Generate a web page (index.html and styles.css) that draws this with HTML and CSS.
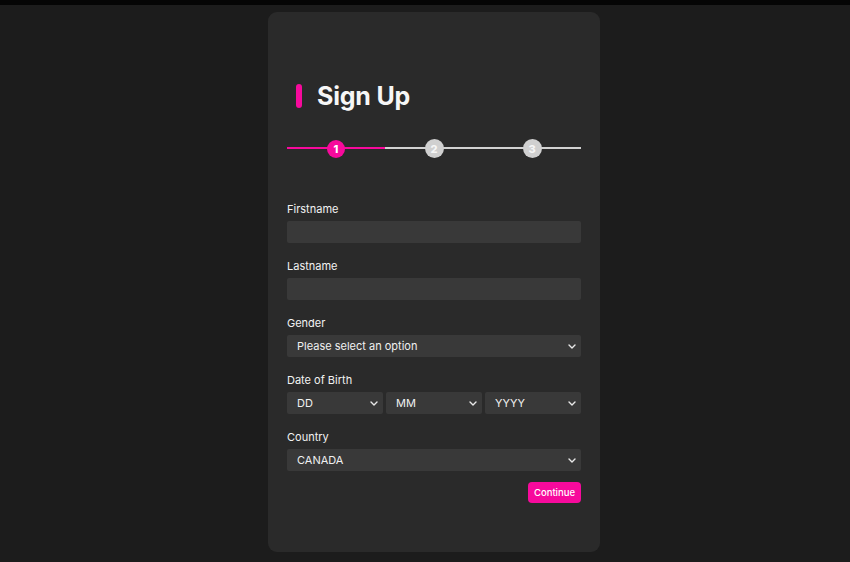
FILE: index.html
```html
<!DOCTYPE html>
<html lang="en">
<head>
<meta charset="utf-8">
<title>Sign Up</title>
<link rel="stylesheet" href="styles.css">
</head>
<body>
<div class="topbar"></div>
<main class="card">
  <h1 class="title"><span class="title-mark"></span>Sign Up</h1>
  <div class="stepper">
    <div class="step-track"><div class="step-fill"></div></div>
    <div class="steps">
      <span class="step active">1</span>
      <span class="step">2</span>
      <span class="step">3</span>
    </div>
  </div>
  <form class="form">
    <div class="fields">
      <div class="field">
        <label class="label">Firstname</label>
        <input class="input" type="text">
      </div>
      <div class="field">
        <label class="label">Lastname</label>
        <input class="input" type="text">
      </div>
      <div class="field">
        <label class="label">Gender</label>
        <div class="select-wrap">
          <select class="select"><option>Please select an option</option></select>
          <svg class="chev" width="8" height="5" viewBox="0 0 8 5"><path d="M1 1l3 3 3-3" fill="none" stroke="#e8e8e8" stroke-width="1.4" stroke-linecap="round" stroke-linejoin="round"/></svg>
        </div>
      </div>
      <div class="field">
        <label class="label">Date of Birth</label>
        <div class="dob">
          <div class="select-wrap">
            <select class="select"><option>DD</option></select>
            <svg class="chev" width="8" height="5" viewBox="0 0 8 5"><path d="M1 1l3 3 3-3" fill="none" stroke="#e8e8e8" stroke-width="1.4" stroke-linecap="round" stroke-linejoin="round"/></svg>
          </div>
          <div class="select-wrap">
            <select class="select"><option>MM</option></select>
            <svg class="chev" width="8" height="5" viewBox="0 0 8 5"><path d="M1 1l3 3 3-3" fill="none" stroke="#e8e8e8" stroke-width="1.4" stroke-linecap="round" stroke-linejoin="round"/></svg>
          </div>
          <div class="select-wrap">
            <select class="select"><option>YYYY</option></select>
            <svg class="chev" width="8" height="5" viewBox="0 0 8 5"><path d="M1 1l3 3 3-3" fill="none" stroke="#e8e8e8" stroke-width="1.4" stroke-linecap="round" stroke-linejoin="round"/></svg>
          </div>
        </div>
      </div>
      <div class="field">
        <label class="label">Country</label>
        <div class="select-wrap">
          <select class="select"><option>CANADA</option></select>
          <svg class="chev" width="8" height="5" viewBox="0 0 8 5"><path d="M1 1l3 3 3-3" fill="none" stroke="#e8e8e8" stroke-width="1.4" stroke-linecap="round" stroke-linejoin="round"/></svg>
        </div>
      </div>
    </div>
    <div class="actions">
      <button class="btn" type="button">Continue</button>
    </div>
  </form>
</main>
</body>
</html>
```

FILE: styles.css
```css
* { box-sizing: border-box; }
html, body {
  margin: 0;
  padding: 0;
  background: #1c1c1c;
  font-family: Inter, "Liberation Sans", Arial, sans-serif;
  color: #f0f0f0;
  height: 100%;
  overflow: hidden;
}
.topbar {
  height: 5px;
  background: #050505;
}
.card {
  margin: 7px 0 0 268px;
  width: 332px;
  height: 540px;
  background: #2a2a2a;
  border-radius: 9px;
  padding: 72px 19px 0 19px;
}
.title {
  display: flex;
  align-items: center;
  height: 24px;
  margin: 0 0 31px 0;
  padding-left: 9px;
  font-size: 25px;
  font-weight: 700;
  color: #f6f6f6;
  letter-spacing: -0.2px;
}
.title-mark {
  width: 6px;
  height: 24px;
  border-radius: 3px;
  background: #f70a9c;
  margin-right: 15px;
}
.stepper {
  position: relative;
  height: 18px;
  margin-bottom: 45px;
}
.step-track {
  position: absolute;
  left: 0;
  right: 0;
  top: 8px;
  height: 2px;
  background: #d2d2d2;
}
.step-fill {
  width: 33.4%;
  height: 100%;
  background: #f70a9c;
}
.steps {
  position: relative;
  display: grid;
  grid-template-columns: 1fr 1fr 1fr;
  justify-items: center;
  align-items: center;
  height: 18px;
}
.step {
  width: 19px;
  height: 19px;
  border-radius: 50%;
  background: #d0d0d0;
  color: #f6f6f6;
  font-size: 11px;
  font-weight: 800;
  display: flex;
  align-items: center;
  justify-content: center;
}
.step.active {
  width: 18px;
  height: 18px;
  background: #f70a9c;
  color: #ffffff;
}
.fields {
  display: flex;
  flex-direction: column;
  gap: 16px;
}
.label {
  display: block;
  font-size: 11px;
  line-height: 14px;
  margin-bottom: 5px;
  color: #f2f2f2;
}
.input, .select {
  display: block;
  width: 100%;
  height: 22px;
  border: none;
  border-radius: 2px;
  background: #393939;
  outline: none;
}
.select {
  appearance: none;
  -webkit-appearance: none;
  color: #f0f0f0;
  font-family: inherit;
  font-size: 11px;
  padding: 0 0 0 10px;
}
.select-wrap {
  position: relative;
}
.chev {
  position: absolute;
  right: 5px;
  top: 9px;
  pointer-events: none;
}
.dob {
  display: grid;
  grid-template-columns: 1fr 1fr 1fr;
  gap: 3px;
}
.actions {
  display: flex;
  justify-content: flex-end;
  margin-top: 11px;
}
.btn {
  width: 53px;
  height: 21px;
  border: none;
  border-radius: 4px;
  background: #f70a9c;
  color: #ffffff;
  font-family: inherit;
  font-size: 9.5px;
  font-weight: 500;
  padding: 0;
}
```
